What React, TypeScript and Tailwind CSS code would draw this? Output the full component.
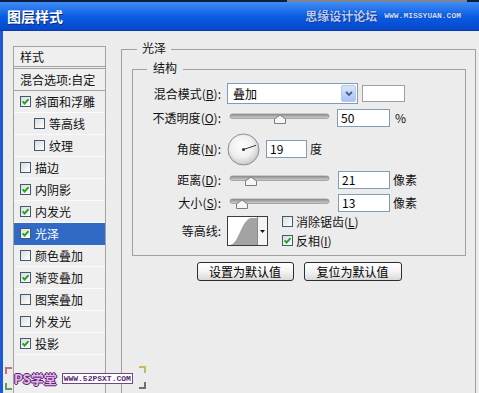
import React from 'react';

interface StyleItem {
  label: string;
  checked: boolean;
  indent?: boolean;
  selected?: boolean;
}

const styleItems: StyleItem[] = [
  { label: '斜面和浮雕', checked: true },
  { label: '等高线', checked: false, indent: true },
  { label: '纹理', checked: false, indent: true },
  { label: '描边', checked: false },
  { label: '内阴影', checked: true },
  { label: '内发光', checked: true },
  { label: '光泽', checked: true, selected: true },
  { label: '颜色叠加', checked: false },
  { label: '渐变叠加', checked: true },
  { label: '图案叠加', checked: false },
  { label: '外发光', checked: false },
  { label: '投影', checked: true },
];

const CheckBox: React.FC<{ checked: boolean }> = ({ checked }) => (
  <div className="w-[11px] h-[11px] shrink-0 border border-[#3d5a78] bg-linear-to-br from-[#dcdcd6] to-white flex items-center justify-center">
    {checked && (
      <svg width="9" height="9" viewBox="0 0 9 9">
        <path d="M1.6 4.4 L3.6 6.5 L7.5 2.1" fill="none" stroke="#22a322" strokeWidth="1.9" />
      </svg>
    )}
  </div>
);

const Slider: React.FC<{ pos: number; id: string }> = ({ pos, id }) => (
  <svg width="104" height="18" viewBox="0 0 104 18" className="shrink-0">
    <defs>
      <linearGradient id={id} x1="0" y1="0" x2="0" y2="1">
        <stop offset="0" stopColor="#8a8a8a" />
        <stop offset="1" stopColor="#d2d2d2" />
      </linearGradient>
    </defs>
    <rect x="3" y="5" width="99" height="4.5" rx="2.2" fill={`url(#${id})`} stroke="#8f8f8f" strokeWidth="0.7" />
    <path
      d={`M${pos - 5.5} 14.5 L${pos + 5.5} 14.5 L${pos + 5.5} 10 L${pos} 6 L${pos - 5.5} 10 Z`}
      fill="#f6f6f6"
      stroke="#7d7d7d"
      strokeWidth="1"
    />
  </svg>
);

const Field: React.FC<{ w: string; value: string }> = ({ w, value }) => (
  <div className={`${w} h-[18px] border border-[#7f9db9] bg-white pl-[3px] flex items-center text-[12px] leading-[14px] text-black`}>
    {value}
  </div>
);

const Label: React.FC<{ text: string; acc?: string }> = ({ text, acc }) => (
  <div className="w-[89px] shrink-0 text-right pr-[1px] text-[12px] leading-[14px] text-[#111]">
    {text}
    {acc && (
      <>
        (<span className="underline underline-offset-1">{acc}</span>)
      </>
    )}
    :
  </div>
);

const Button: React.FC<{ text: string; w: string }> = ({ text, w }) => (
  <div className={`${w} h-[19px] rounded-[3px] border border-[#2e2e2e] bg-linear-to-b from-white via-[#f4f4f4] to-[#d9d9d9] flex items-center justify-center text-[12px] leading-[14px] text-black`}>
    {text}
  </div>
);

export default function App() {
  return (
    <div className="w-[479px] h-[393px] overflow-hidden flex flex-col bg-[#ececec] font-['Noto_Sans_CJK_SC','Liberation_Sans',sans-serif] relative">
      {/* top strip */}
      <div className="h-[2px] flex shrink-0">
        <div className="w-[287px] bg-[#0d1d44]" />
        <div className="w-[180px] bg-[#7d8391]" />
        <div className="flex-1 bg-[#0d1d44]" />
      </div>

      {/* title bar */}
      <div className="h-[29px] shrink-0 bg-linear-to-b from-[#3f8cf3] via-[#0a5de6] to-[#0747c9] border-b border-[#0a3aa8] flex items-center justify-between pl-[7px] pr-[18px]">
        <span className="text-white font-bold text-[14px] leading-[16px] [text-shadow:1px_1px_0_#0b2a7a]">图层样式</span>
        <div className="flex items-center gap-[7px]">
          <span className="text-[12px] font-bold leading-[14px] text-[#b4cdf7] [text-shadow:0_0_1px_#0b2a7a,1px_1px_0_#1a3f99]">思缘设计论坛</span>
          <span className="text-[8px] font-bold leading-[10px] text-[#cfe0ff] font-['Liberation_Mono',monospace] [text-shadow:0_0_1px_#0b2a7a]">WWW.MISSYUAN.COM</span>
        </div>
      </div>

      {/* body */}
      <div className="flex-1 flex min-h-0">
        <div className="w-[3px] bg-[#1d5ad6] shrink-0" />
        <div className="flex-1 flex items-start pl-[10px]">
          {/* styles list */}
          <div className="mt-[15px] w-[93px] h-[380px] shrink-0 border border-[#a3a3a3] bg-[#efefef] flex flex-col text-[12px] leading-[14px] text-[#111]">
            <div className="h-[20px] border-b border-[#a3a3a3] flex items-center pl-[6px]">样式</div>
            <div className="mt-[1px] h-[23px] border-y border-[#a3a3a3] flex items-center pl-[6px]">混合选项:自定</div>
            {styleItems.map((item) => (
              <div
                key={item.label}
                className={`h-[22px] border-b flex items-center gap-[4px] ${item.indent ? 'pl-[20px]' : 'pl-[6px]'} ${
                  item.selected ? 'bg-[#316ac5] text-white border-[#316ac5]' : 'border-[#fafafa]'
                }`}
              >
                <CheckBox checked={item.checked} />
                <span>{item.label}</span>
              </div>
            ))}
          </div>

          {/* 光泽 group */}
          <div className="ml-[15px] mt-[18px] w-[355px] h-[380px] shrink-0 border border-[#a0a0a0] relative">
            <span className="absolute -top-[10px] left-[15px] px-[5px] bg-[#ececec] text-[12px] leading-[16px] text-[#111]">光泽</span>

            {/* 结构 group */}
            <div className="ml-[10px] mt-[19px] w-[334px] border border-[#a0a0a0] relative pt-[13px] pb-[9px]">
              <span className="absolute -top-[10px] left-[14px] px-[6px] bg-[#ececec] text-[12px] leading-[16px] text-[#111]">结构</span>

              <div className="flex items-center h-[21px]">
                <Label text="混合模式" acc="B" />
                <div className="ml-[5px] w-[131px] h-[21px] border border-[#7f9db9] bg-white flex items-center justify-between pl-[5px] pr-[1px]">
                  <span className="text-[12px] leading-[14px] text-black">叠加</span>
                  <div className="w-[15px] h-[17px] rounded-[2px] border border-[#b4c8f0] bg-linear-to-b from-[#d9e5fc] to-[#a9c2f2] flex items-center justify-center">
                    <svg width="8" height="6" viewBox="0 0 8 6">
                      <path d="M1 1 L4 4 L7 1" fill="none" stroke="#4a5f88" strokeWidth="1.8" />
                    </svg>
                  </div>
                </div>
                <div className="ml-[4px] w-[43px] h-[17px] border border-[#a0a0a0] bg-white" />
              </div>

              <div className="mt-[5px] flex items-center h-[18px]">
                <Label text="不透明度" acc="O" />
                <div className="ml-[5px] flex items-center">
                  <Slider pos={53} id="s1" />
                </div>
                <div className="ml-[6px]">
                  <Field w="w-[53px]" value="50" />
                </div>
                <span className="ml-[5px] text-[12px] leading-[14px] text-[#111]">%</span>
              </div>

              <div className="mt-[6px] flex items-center h-[32px]">
                <Label text="角度" acc="N" />
                <svg width="33" height="33" viewBox="0 0 33 33" className="ml-[5px] shrink-0">
                  <defs>
                    <radialGradient id="dial" cx="0.45" cy="0.4" r="0.6">
                      <stop offset="0" stopColor="#ffffff" />
                      <stop offset="0.6" stopColor="#efefef" />
                      <stop offset="1" stopColor="#c9c9c9" />
                    </radialGradient>
                  </defs>
                  <circle cx="16.5" cy="16.5" r="15.5" fill="url(#dial)" stroke="#8c8c8c" strokeWidth="1" />
                  <line x1="16.5" y1="16.5" x2="29" y2="12.3" stroke="#3a3a3a" strokeWidth="1" />
                  <circle cx="16.5" cy="16.5" r="1.6" fill="#3a3a3a" />
                </svg>
                <div className="ml-[6px]">
                  <Field w="w-[41px]" value="19" />
                </div>
                <span className="ml-[3px] text-[12px] leading-[14px] text-[#111]">度</span>
              </div>

              <div className="mt-[6px] flex items-center h-[18px]">
                <Label text="距离" acc="D" />
                <div className="ml-[5px] flex items-center">
                  <Slider pos={24} id="s2" />
                </div>
                <div className="ml-[7px]">
                  <Field w="w-[52px]" value="21" />
                </div>
                <span className="ml-[3px] text-[12px] leading-[14px] text-[#111]">像素</span>
              </div>

              <div className="mt-[5px] flex items-center h-[18px]">
                <Label text="大小" acc="S" />
                <div className="ml-[5px] flex items-center">
                  <Slider pos={15} id="s3" />
                </div>
                <div className="ml-[7px]">
                  <Field w="w-[52px]" value="13" />
                </div>
                <span className="ml-[3px] text-[12px] leading-[14px] text-[#111]">像素</span>
              </div>

              <div className="mt-[4px] flex items-center h-[30px]">
                <Label text="等高线" />
                <div className="ml-[5px] w-[41px] h-[30px] border border-[#3c3c3c] bg-white flex shrink-0">
                  <svg width="29" height="28" viewBox="0 0 29 28">
                    <path d="M2 28 C 11 27, 13 3, 23 1 L 29 1 L 29 28 Z" fill="#a3a3a3" />
                  </svg>
                  <div className="flex-1 border-l border-[#8a8a8a] bg-[#f4f4f4] flex items-center justify-center">
                    <svg width="5" height="3" viewBox="0 0 5 3">
                      <path d="M0 0 L5 0 L2.5 3 Z" fill="#111" />
                    </svg>
                  </div>
                </div>
                <div className="ml-[14px] flex flex-col gap-[5px]">
                  <div className="flex items-center gap-[3px] text-[12px] leading-[14px] text-[#111]">
                    <CheckBox checked={false} />
                    <span>
                      消除锯齿(<span className="underline underline-offset-1">L</span>)
                    </span>
                  </div>
                  <div className="flex items-center gap-[3px] text-[12px] leading-[14px] text-[#111]">
                    <CheckBox checked={true} />
                    <span>
                      反相(<span className="underline underline-offset-1">I</span>)
                    </span>
                  </div>
                </div>
              </div>
            </div>

            <div className="mt-[6px] flex justify-center gap-[10px] pl-[1px]">
              <Button text="设置为默认值" w="w-[97px]" />
              <Button text="复位为默认值" w="w-[98px]" />
            </div>
          </div>
        </div>
      </div>

      {/* bottom-left watermark */}
      <div className="absolute left-[5px] top-[367px] w-[7px] h-[7px] border-l-2 border-t-2 border-[#c0707a]" />
      <div className="absolute left-[5px] top-[383px] w-[7px] h-[7px] border-l-2 border-b-2 border-[#5aa05a]" />
      <div className="absolute left-[139px] top-[366px] w-[7px] h-[7px] border-r-2 border-t-2 border-[#c8b860]" />
      <div className="absolute left-[139px] top-[382px] w-[7px] h-[7px] border-r-2 border-b-2 border-[#707070]" />
      <div className="absolute left-[14px] top-[371px] flex items-center gap-[5px]">
        <span className="text-[13px] font-bold leading-[15px] text-[#e2b6ea] [text-shadow:0_0_1px_#5a1f70,1px_0_0_#5a1f70,-1px_0_0_#5a1f70,0_1px_0_#5a1f70,0_-1px_0_#5a1f70]">PS学堂</span>
        <span className="px-[1px] bg-white border border-[#6a4a80] text-[8px] font-bold leading-[9px] text-[#5a2a7a] font-['Liberation_Mono',monospace]">WWW.52PSXT.COM</span>
      </div>
    </div>
  );
}
